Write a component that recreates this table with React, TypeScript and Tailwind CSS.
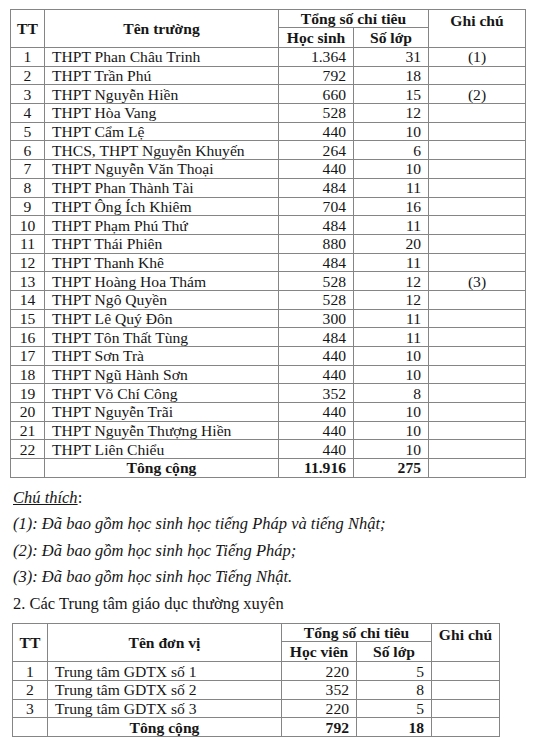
import React from 'react';

type Row = { tt: string; name: string; a: string; b: string; note?: string };

const schools: Row[] = [
  { tt: '1', name: 'THPT Phan Châu Trinh', a: '1.364', b: '31', note: '(1)' },
  { tt: '2', name: 'THPT Trần Phú', a: '792', b: '18' },
  { tt: '3', name: 'THPT Nguyễn Hiền', a: '660', b: '15', note: '(2)' },
  { tt: '4', name: 'THPT Hòa Vang', a: '528', b: '12' },
  { tt: '5', name: 'THPT Cẩm Lệ', a: '440', b: '10' },
  { tt: '6', name: 'THCS, THPT Nguyễn Khuyến', a: '264', b: '6' },
  { tt: '7', name: 'THPT Nguyễn Văn Thoại', a: '440', b: '10' },
  { tt: '8', name: 'THPT Phan Thành Tài', a: '484', b: '11' },
  { tt: '9', name: 'THPT Ông Ích Khiêm', a: '704', b: '16' },
  { tt: '10', name: 'THPT Phạm Phú Thứ', a: '484', b: '11' },
  { tt: '11', name: 'THPT Thái Phiên', a: '880', b: '20' },
  { tt: '12', name: 'THPT Thanh Khê', a: '484', b: '11' },
  { tt: '13', name: 'THPT Hoàng Hoa Thám', a: '528', b: '12', note: '(3)' },
  { tt: '14', name: 'THPT Ngô Quyền', a: '528', b: '12' },
  { tt: '15', name: 'THPT Lê Quý Đôn', a: '300', b: '11' },
  { tt: '16', name: 'THPT Tôn Thất Tùng', a: '484', b: '11' },
  { tt: '17', name: 'THPT Sơn Trà', a: '440', b: '10' },
  { tt: '18', name: 'THPT Ngũ Hành Sơn', a: '440', b: '10' },
  { tt: '19', name: 'THPT Võ Chí Công', a: '352', b: '8' },
  { tt: '20', name: 'THPT Nguyễn Trãi', a: '440', b: '10' },
  { tt: '21', name: 'THPT Nguyễn Thượng Hiền', a: '440', b: '10' },
  { tt: '22', name: 'THPT Liên Chiểu', a: '440', b: '10' },
];

const centers: Row[] = [
  { tt: '1', name: 'Trung tâm GDTX số 1', a: '220', b: '5' },
  { tt: '2', name: 'Trung tâm GDTX số 2', a: '352', b: '8' },
  { tt: '3', name: 'Trung tâm GDTX số 3', a: '220', b: '5' },
];

const td = 'border border-[#858585] p-0 h-[18.7px] leading-[17px] align-middle';

type TableProps = {
  rows: Row[];
  nameHead: string;
  countHead: string;
  total: [string, string];
  widths: [number, number, number, number, number];
  className?: string;
};

// bảng chỉ tiêu: TT | tên | tổng số chỉ tiêu (2 cột) | ghi chú
const QuotaTable: React.FC<TableProps> = ({ rows, nameHead, countHead, total, widths, className }) => (
  <table className={`border-collapse table-fixed text-[15.6px] ${className ?? ''}`} style={{ width: widths.reduce((s, w) => s + w, 0) }}>
    <colgroup>
      {widths.map((w, i) => (
        <col key={i} style={{ width: w }} />
      ))}
    </colgroup>
    <thead>
      <tr>
        <th rowSpan={2} className={`${td} font-bold text-center`}>TT</th>
        <th rowSpan={2} className={`${td} font-bold text-center`}>{nameHead}</th>
        <th colSpan={2} className={`${td} !h-[18px] font-bold text-center`}>Tổng số chỉ tiêu</th>
        <th rowSpan={2} className={`${td} font-bold text-center !align-top pt-[2px]`}>Ghi chú</th>
      </tr>
      <tr>
        <th className={`${td} !h-[20px] font-bold text-center`}>{countHead}</th>
        <th className={`${td} !h-[20px] font-bold text-center`}>Số lớp</th>
      </tr>
    </thead>
    <tbody>
      {rows.map((r) => (
        <tr key={r.tt}>
          <td className={`${td} text-center`}>{r.tt}</td>
          <td className={`${td} pl-[7px] whitespace-nowrap overflow-hidden`}>{r.name}</td>
          <td className={`${td} text-right pr-[7px]`}>{r.a}</td>
          <td className={`${td} text-right pr-[7px]`}>{r.b}</td>
          <td className={`${td} text-center`}>{r.note ?? ''}</td>
        </tr>
      ))}
      <tr>
        <td className={td}></td>
        <td className={`${td} text-center font-bold`}>Tông cộng</td>
        <td className={`${td} text-right pr-[7px] font-bold`}>{total[0]}</td>
        <td className={`${td} text-right pr-[7px] font-bold`}>{total[1]}</td>
        <td className={td}></td>
      </tr>
    </tbody>
  </table>
);

export default function App() {
  return (
    <div className="min-h-[749px] bg-white text-[#161616] font-['Liberation_Serif','Times_New_Roman',serif] pt-[9px]">
      <QuotaTable
        rows={schools}
        nameHead="Tên trường"
        countHead="Học sinh"
        total={['11.916', '275']}
        widths={[34, 234, 75, 75, 97]}
        className="ml-[10px]"
      />

      <div className="pl-[13px] pt-[7px] text-[16.5px] leading-[26.5px]">
        <p>
          <span className="italic underline">Chú thích</span>:
        </p>
        <p className="italic">(1): Đã bao gồm học sinh học tiếng Pháp và tiếng Nhật;</p>
        <p className="italic">(2): Đã bao gồm học sinh học Tiếng Pháp;</p>
        <p className="italic">(3): Đã bao gồm học sinh học Tiếng Nhật.</p>
        <p>2. Các Trung tâm giáo dục thường xuyên</p>
      </div>

      <QuotaTable
        rows={centers}
        nameHead="Tên đơn vị"
        countHead="Học viên"
        total={['792', '18']}
        widths={[35, 234, 75, 75, 68]}
        className="ml-[12px] mt-[6px]"
      />
    </div>
  );
}
